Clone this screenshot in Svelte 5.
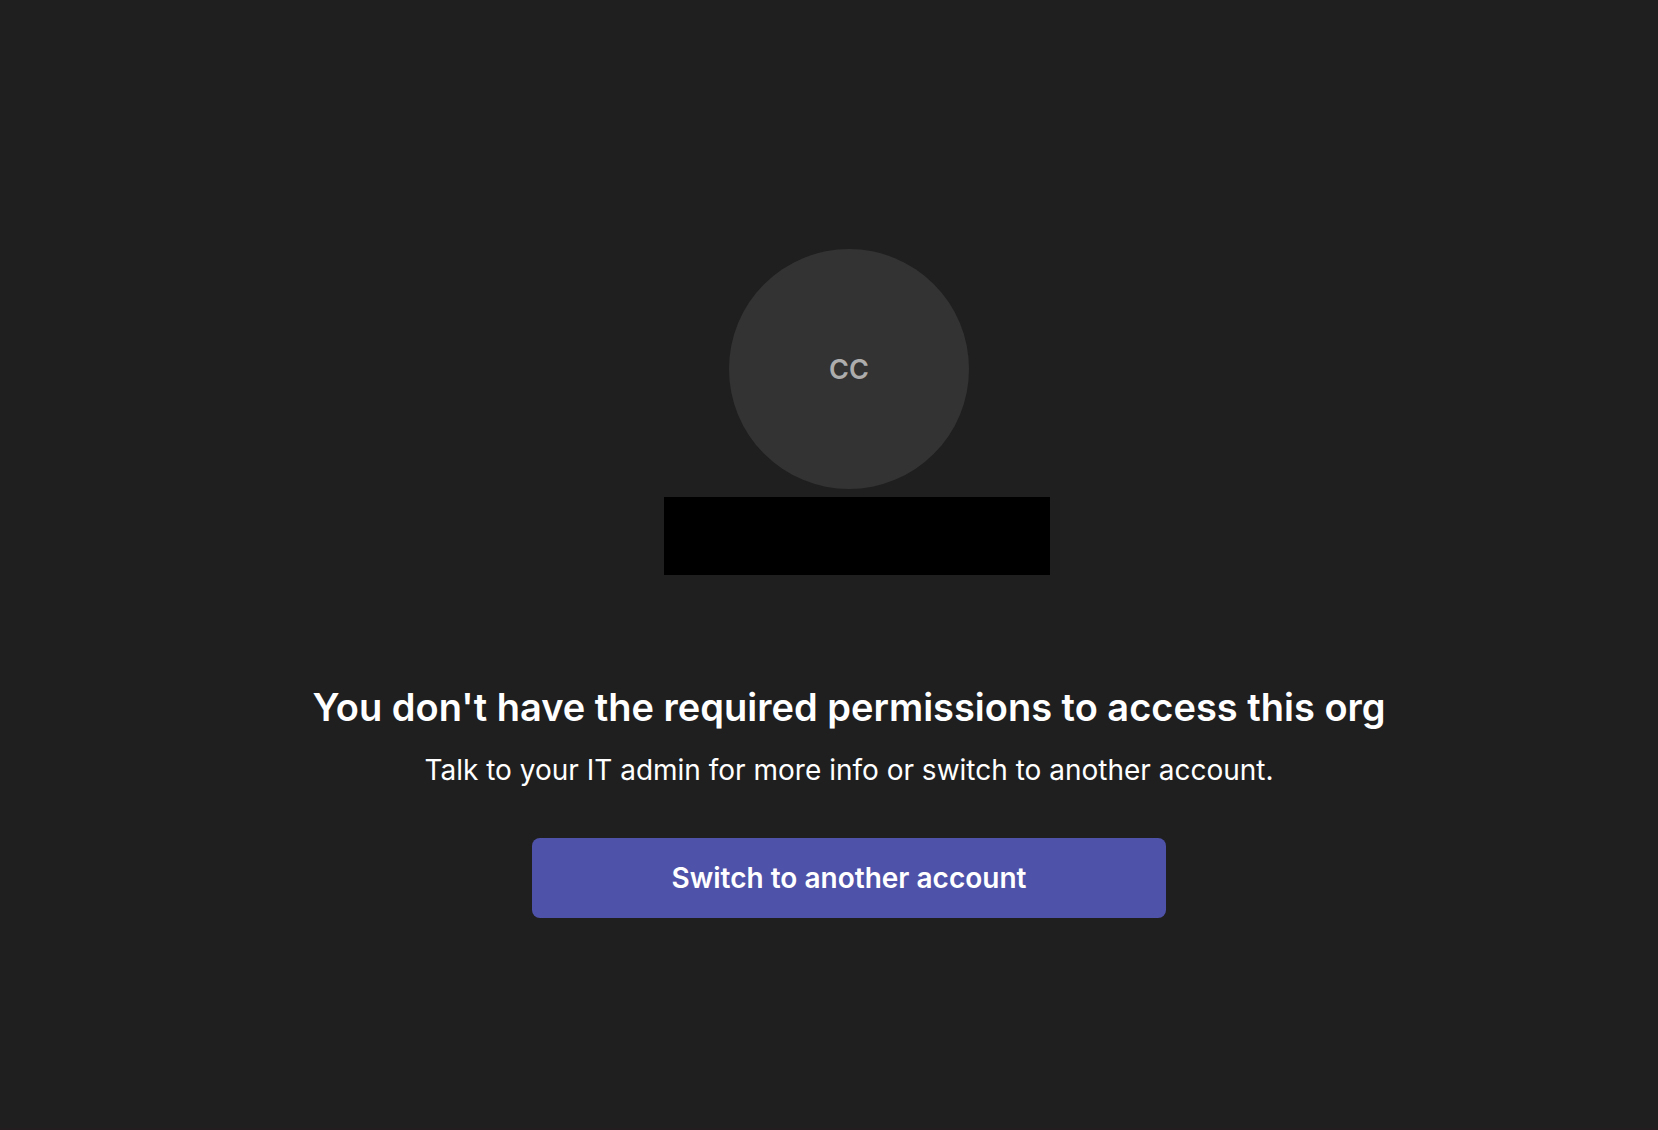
<script>
  const initials = 'CC';
  const heading = "You don't have the required permissions to access this org";
  const message = 'Talk to your IT admin for more info or switch to another account.';
</script>

<main class="page">
  <section class="profile">
    <div class="avatar">{initials}</div>
    <div class="account-name"></div>
  </section>
  <h1>{heading}</h1>
  <p>{message}</p>
  <button type="button">Switch to another account</button>
</main>

<style>
  :global(body) {
    margin: 0;
    background: #1f1f1f;
  }

  .page {
    box-sizing: border-box;
    min-height: 100vh;
    padding: 39px 0 0 40px;
    display: flex;
    flex-direction: column;
    align-items: center;
    justify-content: center;
    background: #1f1f1f;
    border-bottom: 2px solid #231d1f;
    color: #fff;
    font-family: Inter, 'Liberation Sans', sans-serif;
    text-align: center;
  }

  .profile {
    display: flex;
    flex-direction: column;
    align-items: center;
    gap: 8px;
  }

  .avatar {
    width: 240px;
    height: 240px;
    display: flex;
    align-items: center;
    justify-content: center;
    border-radius: 50%;
    background: #333;
    color: #adadad;
    font-size: 27px;
    font-weight: 600;
  }

  .account-name {
    width: 386px;
    height: 78px;
    margin-left: 16px;
    background: #000;
  }

  h1 {
    margin: 104px 0 0;
    font-size: 38px;
    line-height: 56px;
    font-weight: 600;
  }

  p {
    margin: 15px 0 0;
    font-size: 28px;
    line-height: 40px;
    font-weight: 400;
  }

  button {
    width: 634px;
    max-width: 100%;
    height: 80px;
    margin-top: 48px;
    border: 0;
    border-radius: 8px;
    background: #4f52a9;
    color: #fff;
    font: 600 28px/40px Inter, 'Liberation Sans', sans-serif;
    cursor: pointer;
  }
</style>
